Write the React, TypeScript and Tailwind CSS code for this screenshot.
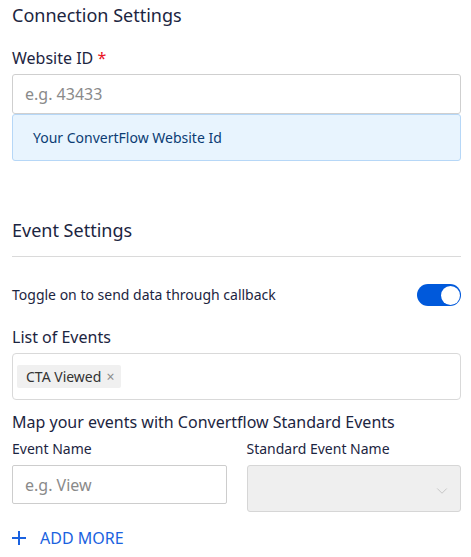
import { ChevronDown } from "lucide-react";

function Toggle() {
  return (
    <div className="flex h-[22px] w-[44px] items-center justify-end rounded-full bg-[#0059db] p-[1.5px]">
      <div className="h-[19px] w-[19px] rounded-full bg-white" />
    </div>
  );
}

export default function App() {
  return (
    <main className="min-h-screen bg-white pl-3 pr-[10px] font-['Noto_Sans',sans-serif] text-[#1c2541]">
      <h2 className="mt-[3px] text-[18px] leading-6">Connection Settings</h2>

      <label className="mt-[19px] block text-base leading-6">
        Website ID <span className="text-[#e8121f]">*</span>
      </label>

      <input
        placeholder="e.g. 43433"
        className="mt-1 block h-10 w-full rounded-[3px] border border-[#cfcfcf] px-3 text-base text-[#333] outline-none placeholder:text-[#8a8a8a]"
      />

      <div className="flex h-[47px] items-center rounded-[3px] border border-[#b6d7f7] bg-[#e8f4fe] pl-5 text-sm text-[#0b3c74]">
        Your ConvertFlow Website Id
      </div>

      <h2 className="mt-[57px] text-[18px] leading-6">Event Settings</h2>

      <div className="mt-[14px] h-px bg-[#dadada]" />

      <div className="mt-[27px] flex h-[22px] items-center justify-between">
        <span className="text-sm leading-5">
          Toggle on to send data through callback
        </span>
        <Toggle />
      </div>

      <p className="mt-[19px] text-base leading-6">List of Events</p>

      <div className="mt-1 flex h-[47px] items-center rounded-[4px] border border-[#d9d9d9] pl-1">
        <span className="flex h-[23px] items-center gap-[5px] rounded-[2px] bg-[#f0f0f0] pl-[9px] pr-[7px] text-sm text-[#333]">
          CTA Viewed
          <span className="text-[14px] leading-none text-[#8c8c8c]">×</span>
        </span>
      </div>

      <p className="mt-[10px] text-base leading-6">
        Map your events with Convertflow Standard Events
      </p>

      <div className="mt-[5px] grid grid-cols-2 items-start gap-5">
        <div>
          <p className="text-sm leading-5">Event Name</p>
          <input
            placeholder="e.g. View"
            className="mt-[6px] block h-[39px] w-full rounded-[2px] border border-[#cdcdcd] px-3 text-base text-[#333] outline-none placeholder:text-[#8a8a8a]"
          />
        </div>
        <div>
          <p className="text-sm leading-5">Standard Event Name</p>
          <div className="mt-[6px] flex h-[47px] items-center justify-end rounded-[3px] border border-[#d6d6d6] bg-[#efefef] pr-[9px]">
            <ChevronDown size={18} strokeWidth={1} className="mt-1 text-[#b8b8b8]" />
          </div>
        </div>
      </div>

      <button className="mt-[14px] flex items-center gap-[14px] text-base leading-6 text-[#1a62e0]">
        <svg width="14" height="14" viewBox="0 0 14 14" fill="none">
          <path d="M7 0v14M0 7h14" stroke="currentColor" strokeWidth="2" />
        </svg>
        ADD MORE
      </button>
    </main>
  );
}
